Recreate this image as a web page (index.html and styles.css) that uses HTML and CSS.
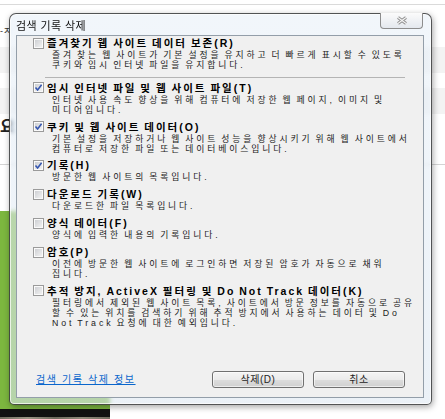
FILE: index.html
```html
<!DOCTYPE html>
<html>
<head>
  <title>검색 기록 삭제</title>
  <link rel="stylesheet" href="styles.css">
</head>
<body>

<!-- 뒤쪽 페이지 -->
<div class="page">
  <div class="page-top"></div>
  <div class="page-head">-ㅈ</div>
  <div class="page-band"></div>
  <div class="page-gap"></div>
  <div class="page-band"></div>
  <div class="page-title">요</div>
  <div class="page-space"></div>
  <div class="page-green"></div>
  <div class="page-black"></div>
  <div class="page-photo"></div>
</div>

<!-- 대화 상자 -->
<div class="dialog">
  <div class="titlebar">
    <span class="title">검색 기록 삭제</span>
    <div class="close">
      <svg width="12" height="9" viewBox="0 0 12 9">
        <path d="M2 1.5 L10 7.5 M10 1.5 L2 7.5" stroke="#8c8c8c" stroke-width="3"/>
        <path d="M2 1.5 L10 7.5 M10 1.5 L2 7.5" stroke="#f6f6f6" stroke-width="1.1"/>
      </svg>
    </div>
  </div>

  <div class="client">
    <div class="opt first">
      <div class="opt-head"><span class="cb"></span><span class="opt-label">즐겨찾기 웹 사이트 데이터 보존(R)</span></div>
      <p class="opt-desc">즐겨 찾는 웹 사이트가 기본 설정을 유지하고 더 빠르게 표시할 수 있도록<br>쿠키와 임시 인터넷 파일을 유지합니다.</p>
    </div>
    <div class="sep"></div>
    <div class="opt first">
      <div class="opt-head"><span class="cb on"></span><span class="opt-label">임시 인터넷 파일 및 웹 사이트 파일(T)</span></div>
      <p class="opt-desc">인터넷 사용 속도 향상을 위해 컴퓨터에 저장한 웹 페이지, 이미지 및<br>미디어입니다.</p>
    </div>
    <div class="opt">
      <div class="opt-head"><span class="cb on"></span><span class="opt-label">쿠키 및 웹 사이트 데이터(O)</span></div>
      <p class="opt-desc">기본 설정을 저장하거나 웹 사이트 성능을 향상시키기 위해 웹 사이트에서<br>컴퓨터로 저장한 파일 또는 데이터베이스입니다.</p>
    </div>
    <div class="opt">
      <div class="opt-head"><span class="cb on"></span><span class="opt-label">기록(H)</span></div>
      <p class="opt-desc">방문한 웹 사이트의 목록입니다.</p>
    </div>
    <div class="opt">
      <div class="opt-head"><span class="cb"></span><span class="opt-label">다운로드 기록(W)</span></div>
      <p class="opt-desc">다운로드한 파일 목록입니다.</p>
    </div>
    <div class="opt">
      <div class="opt-head"><span class="cb"></span><span class="opt-label">양식 데이터(F)</span></div>
      <p class="opt-desc">양식에 입력한 내용의 기록입니다.</p>
    </div>
    <div class="opt">
      <div class="opt-head"><span class="cb"></span><span class="opt-label">암호(P)</span></div>
      <p class="opt-desc">이전에 방문한 웹 사이트에 로그인하면 저장된 암호가 자동으로 채워<br>집니다.</p>
    </div>
    <div class="opt">
      <div class="opt-head"><span class="cb"></span><span class="opt-label">추적 방지, ActiveX 필터링 및 Do Not Track 데이터(K)</span></div>
      <p class="opt-desc">필터링에서 제외된 웹 사이트 목록, 사이트에서 방문 정보를 자동으로 공유<br>할 수 있는 위치를 검색하기 위해 추적 방지에서 사용하는 데이터 및 Do<br>Not Track 요청에 대한 예외입니다.</p>
    </div>

    <div class="footer">
      <a class="link" href="#">검색 기록 삭제 정보</a>
      <div class="buttons">
        <button class="btn">삭제(D)</button>
        <button class="btn">취소</button>
      </div>
    </div>
  </div>
</div>

<script>
  // 체크 상자 토글
  document.querySelectorAll('.opt-head').forEach(function (head) {
    head.addEventListener('click', function () {
      head.querySelector('.cb').classList.toggle('on');
    });
  });
</script>

</body>
</html>
```

FILE: styles.css
```css
* { box-sizing: border-box; }
body { margin: 0; width: 445px; height: 419px; overflow: hidden; position: relative; background: #fff; font-family: "Liberation Sans", "Noto Sans CJK KR", sans-serif; }

/* 뒤쪽 페이지 */
.page-top { height: 5px; border-bottom: 1px solid #dadada; }
.page-head { height: 42px; padding-top: 21px; font-size: 9px; line-height: 10px; color: #333; white-space: nowrap; }
.page-band { height: 26px; background: #f3f3f3; }
.page-gap { height: 15px; }
.page-title { height: 51px; padding-top: 4px; border-bottom: 1px solid #d4d4d4; font-size: 16px; font-weight: bold; line-height: 18px; color: #222; }
.page-space { height: 46px; }
.page-green { width: 110px; height: 198px; background: #7cb73f; }
.page-black { width: 110px; height: 8px; background: #111; }
.page-photo { width: 110px; height: 3px; background: linear-gradient(90deg, #6f6c5e, #9a9585, #6d6a5d, #8f8a7a, #6f6c5e); }

/* 대화 상자 */
.dialog { position: absolute; left: 9px; top: 13px; width: 423px; height: 392px; padding: 0 7px 6px 6px; border: 1px solid rgba(30, 30, 30, 0.75); border-radius: 7px 7px 5px 5px; background: linear-gradient(rgba(232, 240, 248, 0.6), rgba(222, 232, 242, 0.6)); backdrop-filter: blur(2px); box-shadow: inset 0 0 0 1px rgba(255, 255, 255, 0.7), 1px 2px 6px rgba(0, 0, 0, 0.35); }
.titlebar { height: 21px; position: relative; }
.title { display: block; padding-top: 6px; font-size: 11px; letter-spacing: 0.4px; line-height: 13px; color: #111; }
.close { position: absolute; top: -1px; right: 1px; width: 43px; height: 16px; border: 1px solid #8d8d8d; border-top: none; border-radius: 0 0 4px 4px; background: linear-gradient(#fbfbfb, #e4e8ee); display: flex; align-items: center; justify-content: center; }
.close svg { display: block; }

.client { height: 363px; display: flex; flex-direction: column; padding: 1px 18px 9px 16px; border: 1px solid #939ea9; background: #f0f0f0; color: #1a1a1a; }

.opt { margin-top: 5px; }
.opt.first { margin-top: 0; }
.opt-head { display: flex; align-items: center; height: 12px; }
.opt-label { margin-left: 3px; font-size: 10.5px; font-weight: bold; letter-spacing: 2px; word-spacing: -1px; line-height: 12px; color: #000; white-space: nowrap; }
.opt-desc { margin: 2px 0 0 19px; font-size: 8.8px; letter-spacing: 2.9px; word-spacing: -2.25px; line-height: 9.9px; white-space: nowrap; color: #222; }

.cb { width: 11px; height: 11px; flex: none; border: 1px solid #9a9a9a; background: linear-gradient(135deg, #c9cbcf, #f6f6f6); box-shadow: inset 0 0 0 1px #fafafa; }
.cb.on { background: url("data:image/svg+xml,%3Csvg xmlns='http://www.w3.org/2000/svg' width='9' height='9'%3E%3Cpath d='M1.5 4.5 L3.6 7 L7.6 1.8' fill='none' stroke='%233556b0' stroke-width='1.6'/%3E%3C/svg%3E") center no-repeat, linear-gradient(135deg, #c9cbcf, #f6f6f6); }

.sep { margin: 6px 0 4px 12px; width: 360px; height: 1px; background: #b4b4b4; }

.footer { margin-top: auto; display: flex; align-items: center; justify-content: space-between; }
.link { margin-left: 3px; font-size: 10px; letter-spacing: 1.6px; line-height: 12px; color: #0a66cc; text-decoration: underline; }
.buttons { display: flex; gap: 9px; }
.btn { width: 92px; height: 17px; padding: 0; border: 1px solid #707070; border-radius: 3px; background: linear-gradient(#f4f4f4 0%, #ebebeb 50%, #dddddd 51%, #d0d0d0 100%); box-shadow: inset 0 0 0 1px rgba(255, 255, 255, 0.6); font-family: "Liberation Sans", "Noto Sans CJK KR", sans-serif; font-size: 10px; letter-spacing: 0.5px; line-height: 14px; color: #1e1e1e; }
```
